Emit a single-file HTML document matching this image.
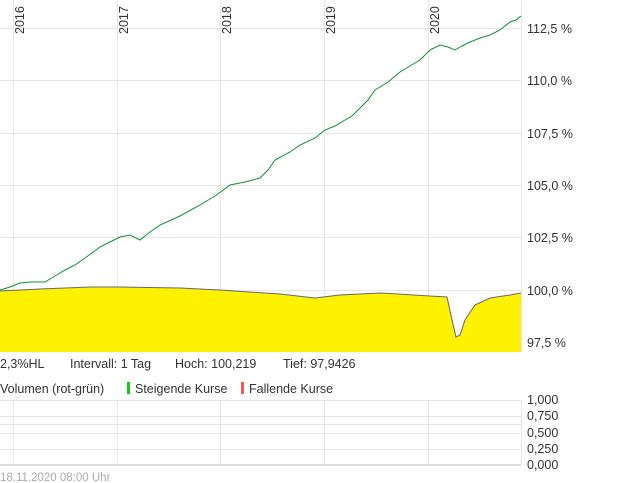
<!DOCTYPE html>
<html><head><style>
html,body{margin:0;padding:0;background:#fff;width:620px;height:483px;overflow:hidden;font-family:"Liberation Sans",sans-serif;}
</style></head><body>
<svg width="620" height="483" style="position:absolute;left:0;top:0" font-family="Liberation Sans, sans-serif">
<g stroke="#e6e6e6" stroke-width="1">
<line x1="0" y1="28.5" x2="521" y2="28.5"/><line x1="0" y1="80.5" x2="521" y2="80.5"/><line x1="0" y1="133.5" x2="521" y2="133.5"/><line x1="0" y1="185.5" x2="521" y2="185.5"/><line x1="0" y1="237.5" x2="521" y2="237.5"/><line x1="0" y1="290.5" x2="521" y2="290.5"/><line x1="0" y1="342.5" x2="521" y2="342.5"/>
<line x1="13.5" y1="0" x2="13.5" y2="352"/><line x1="117.5" y1="0" x2="117.5" y2="352"/><line x1="220.5" y1="0" x2="220.5" y2="352"/><line x1="324.5" y1="0" x2="324.5" y2="352"/><line x1="428.5" y1="0" x2="428.5" y2="352"/><line x1="521.5" y1="0" x2="521.5" y2="352"/>
<line x1="0" y1="400.5" x2="521" y2="400.5"/><line x1="0" y1="416.5" x2="521" y2="416.5"/><line x1="0" y1="424.5" x2="521" y2="424.5"/><line x1="0" y1="433.5" x2="521" y2="433.5"/><line x1="0" y1="449.5" x2="521" y2="449.5"/>
<line x1="13.5" y1="400" x2="13.5" y2="465"/><line x1="117.5" y1="400" x2="117.5" y2="465"/><line x1="220.5" y1="400" x2="220.5" y2="465"/><line x1="324.5" y1="400" x2="324.5" y2="465"/><line x1="428.5" y1="400" x2="428.5" y2="465"/><line x1="521.5" y1="400" x2="521.5" y2="465"/>
</g>
<line x1="0" y1="465" x2="521" y2="465" stroke="#ddd" stroke-width="2"/>
<path d="M0,291 L40,289 L90,287 L120,287 L180,288 L220,290 L280,294 L315,298 L340,295 L380,293 L430,296 L447,297 L452,320 L456,337 L460,335 L465,320 L475,305 L490,298 L510,295 L521,293 L521,352 L0,352 Z" fill="#fff200"/>
<polyline fill="none" stroke="#667" stroke-width="1" points="0,291 40,289 90,287 120,287 180,288 220,290 280,294 315,298 340,295 380,293 430,296 447,297 452,320 456,337 460,335 465,320 475,305 490,298 510,295 521,293"/>
<polyline fill="none" stroke="#119030" stroke-width="1" points="0,290 10,287 20,283 30,282 45,282 55,276 65,270 75,265 85,258 100,247 110,242 120,237 130,235 140,240 150,232 160,225 180,216 200,205 215,196 230,185 245,182 260,178 268,170 275,160 290,152 300,145 315,138 325,130 335,126 345,120 352,116 360,108 368,100 375,90 388,82 400,72 410,66 420,60 425,55 430,50 440,45 448,47 455,50 462,46 470,42 480,38 490,35 500,30 510,22 516,20 521,16"/>
<g font-size="12.5" fill="#333">
<text transform="translate(24,34) rotate(-90)">2016</text>
<text transform="translate(128,34) rotate(-90)">2017</text>
<text transform="translate(231,34) rotate(-90)">2018</text>
<text transform="translate(335,34) rotate(-90)">2019</text>
<text transform="translate(439,34) rotate(-90)">2020</text>
<text x="527" y="33">112,5 %</text><text x="527" y="85">110,0 %</text><text x="527" y="138">107,5 %</text><text x="527" y="190">105,0 %</text><text x="527" y="242">102,5 %</text><text x="527" y="295">100,0 %</text><text x="527" y="347">97,5 %</text>
<text x="527" y="404">1,000</text><text x="527" y="420">0,750</text><text x="527" y="437">0,500</text><text x="527" y="453">0,250</text><text x="527" y="469">0,000</text>
<text x="0" y="368">2,3%HL</text><text x="70" y="368">Intervall: 1 Tag</text><text x="175" y="368">Hoch:  100,219</text><text x="283" y="368">Tief: 97,9426</text>
<text x="0" y="393">Volumen (rot-grün)</text><text x="135" y="393">Steigende Kurse</text><text x="249" y="393">Fallende Kurse</text>
</g>
<rect x="127" y="382" width="3" height="12" fill="#1c1"/>
<rect x="241" y="382" width="3" height="12" fill="#f55"/>
<text x="0" y="481" font-size="11.5" fill="#aaa">18.11.2020 08:00 Uhr</text>
</svg>
</body></html>
